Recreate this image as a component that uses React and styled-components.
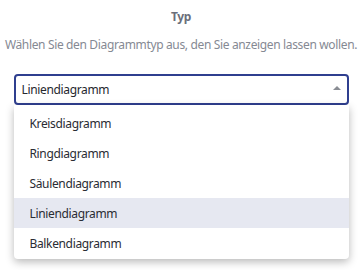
import React, { useState } from "react";
import styled, { createGlobalStyle } from "styled-components";

const GlobalStyle = createGlobalStyle`
  html, body {
    margin: 0;
    padding: 0;
    background: #ffffff;
  }
  body {
    font-family: "Noto Sans", "Open Sans", Arial, sans-serif;
    letter-spacing: -0.35px;
  }
`;

const options = [
  "Kreisdiagramm",
  "Ringdiagramm",
  "Säulendiagramm",
  "Liniendiagramm",
  "Balkendiagramm",
];

const App = () => {
  const [selected, setSelected] = useState("Liniendiagramm");

  return (
    <>
      <GlobalStyle />
      <Page>
        <Title>Typ</Title>
        <Hint>Wählen Sie den Diagrammtyp aus, den Sie anzeigen lassen wollen.</Hint>
        <Field>
          <Select>
            <Value>{selected}</Value>
            <Caret />
          </Select>
          <Menu>
            {options.map((opt) => (
              <Option
                key={opt}
                $active={opt === selected}
                onClick={() => setSelected(opt)}
              >
                {opt}
              </Option>
            ))}
          </Menu>
        </Field>
      </Page>
    </>
  );
};

const Page = styled.div`
  width: 362px;
  height: 270px;
  display: flex;
  flex-direction: column;
  align-items: center;
  padding-top: 8px;
  box-sizing: border-box;
`;

const Title = styled.div`
  font-size: 12px;
  font-weight: 700;
  color: #6b6f7b;
  line-height: 18px;
`;

const Hint = styled.div`
  margin-top: 10px;
  font-size: 12px;
  color: #858993;
  line-height: 18px;
  white-space: nowrap;
`;

const Field = styled.div`
  position: relative;
  margin-top: 20px;
  width: 335px;
`;

const Select = styled.div`
  height: 31px;
  box-sizing: border-box;
  border: 2px solid #2f3f8f;
  border-radius: 4px;
  display: flex;
  align-items: center;
  justify-content: space-between;
  padding: 0 6px 0 6px;
`;

const Value = styled.span`
  font-size: 12px;
  color: #26282e;
`;

const Caret = styled.span`
  width: 0;
  height: 0;
  border-left: 4px solid transparent;
  border-right: 4px solid transparent;
  border-bottom: 4px solid #8a8d94;
  margin-top: -3px;
`;

const Menu = styled.div`
  position: absolute;
  top: 31px;
  left: 0;
  right: 0;
  background: #ffffff;
  border-radius: 0 0 4px 4px;
  box-shadow: 0 3px 8px rgba(0, 0, 0, 0.28);
  padding: 3px 0 1px;
`;

const Option = styled.div`
  height: 30px;
  display: flex;
  align-items: center;
  padding-left: 16px;
  font-size: 12px;
  color: #2a2c33;
  background: ${(p) => (p.$active ? "#e6e8f1" : "transparent")};
  cursor: pointer;
`;

export default App;
